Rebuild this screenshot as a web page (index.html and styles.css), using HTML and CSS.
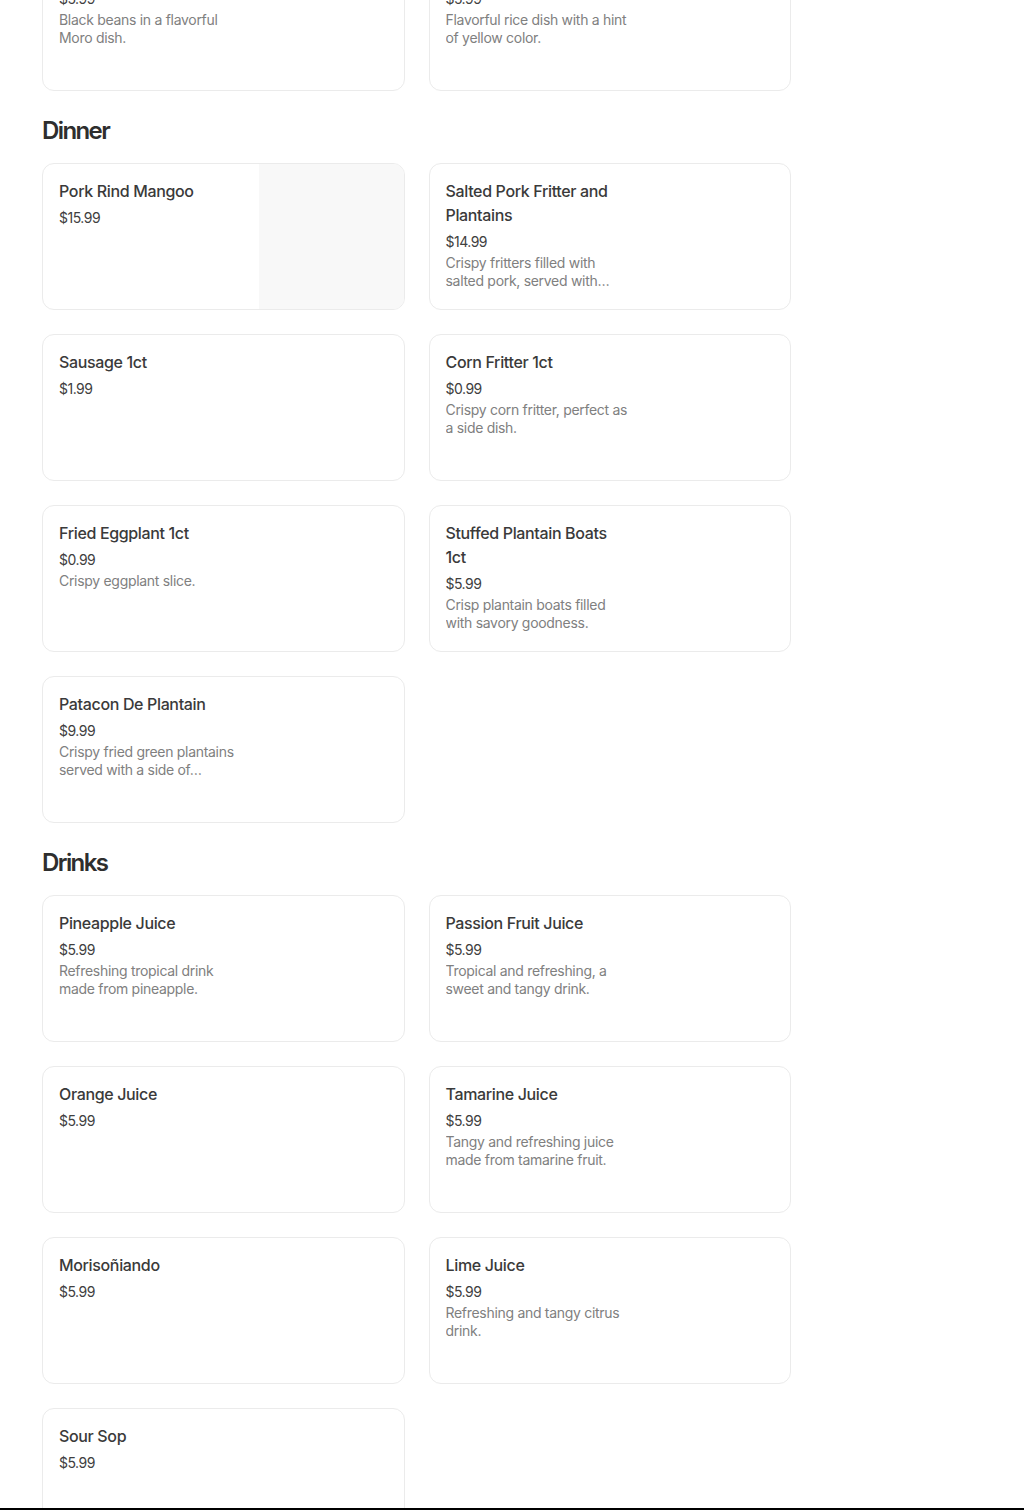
FILE: index.html
```html
<!DOCTYPE html>
<html lang="en">
<head>
<meta charset="utf-8">
<title>Menu</title>
<link rel="stylesheet" href="styles.css">
</head>
<body>
<main class="menu">
  <section class="category">
    <div class="grid">
      <article class="card">
        <div class="card__text">
          <h3 class="card__title">Moro Negro</h3>
          <div class="card__price">$5.99</div>
          <p class="card__desc">Black beans in a flavorful Moro dish.</p>
        </div>
      </article>
      <article class="card">
        <div class="card__text">
          <h3 class="card__title">Yellow Rice</h3>
          <div class="card__price">$5.99</div>
          <p class="card__desc">Flavorful rice dish with a hint of yellow color.</p>
        </div>
      </article>
    </div>
  </section>

  <section class="category">
    <h2 class="category__title">Dinner</h2>
    <div class="grid">
      <article class="card">
        <div class="card__text">
          <h3 class="card__title">Pork Rind Mangoo</h3>
          <div class="card__price">$15.99</div>
        </div>
        <div class="card__image"></div>
      </article>
      <article class="card">
        <div class="card__text">
          <h3 class="card__title">Salted Pork Fritter and Plantains</h3>
          <div class="card__price">$14.99</div>
          <p class="card__desc">Crispy fritters filled with salted pork, served with…</p>
        </div>
      </article>
      <article class="card">
        <div class="card__text">
          <h3 class="card__title">Sausage 1ct</h3>
          <div class="card__price">$1.99</div>
        </div>
      </article>
      <article class="card">
        <div class="card__text">
          <h3 class="card__title">Corn Fritter 1ct</h3>
          <div class="card__price">$0.99</div>
          <p class="card__desc">Crispy corn fritter, perfect as a side dish.</p>
        </div>
      </article>
      <article class="card">
        <div class="card__text">
          <h3 class="card__title">Fried Eggplant 1ct</h3>
          <div class="card__price">$0.99</div>
          <p class="card__desc">Crispy eggplant slice.</p>
        </div>
      </article>
      <article class="card">
        <div class="card__text">
          <h3 class="card__title">Stuffed Plantain Boats 1ct</h3>
          <div class="card__price">$5.99</div>
          <p class="card__desc">Crisp plantain boats filled with savory goodness.</p>
        </div>
      </article>
      <article class="card">
        <div class="card__text">
          <h3 class="card__title">Patacon De Plantain</h3>
          <div class="card__price">$9.99</div>
          <p class="card__desc">Crispy fried green plantains served with a side of…</p>
        </div>
      </article>
    </div>
  </section>

  <section class="category">
    <h2 class="category__title">Drinks</h2>
    <div class="grid">
      <article class="card">
        <div class="card__text">
          <h3 class="card__title">Pineapple Juice</h3>
          <div class="card__price">$5.99</div>
          <p class="card__desc">Refreshing tropical drink made from pineapple.</p>
        </div>
      </article>
      <article class="card">
        <div class="card__text">
          <h3 class="card__title">Passion Fruit Juice</h3>
          <div class="card__price">$5.99</div>
          <p class="card__desc">Tropical and refreshing, a sweet and tangy drink.</p>
        </div>
      </article>
      <article class="card">
        <div class="card__text">
          <h3 class="card__title">Orange Juice</h3>
          <div class="card__price">$5.99</div>
        </div>
      </article>
      <article class="card">
        <div class="card__text">
          <h3 class="card__title">Tamarine Juice</h3>
          <div class="card__price">$5.99</div>
          <p class="card__desc">Tangy and refreshing juice made from tamarine fruit.</p>
        </div>
      </article>
      <article class="card">
        <div class="card__text">
          <h3 class="card__title">Morisoñiando</h3>
          <div class="card__price">$5.99</div>
        </div>
      </article>
      <article class="card">
        <div class="card__text">
          <h3 class="card__title">Lime Juice</h3>
          <div class="card__price">$5.99</div>
          <p class="card__desc">Refreshing and tangy citrus drink.</p>
        </div>
      </article>
      <article class="card">
        <div class="card__text">
          <h3 class="card__title">Sour Sop</h3>
          <div class="card__price">$5.99</div>
        </div>
      </article>
    </div>
  </section>
</main>
<div class="bottom-bar"></div>
</body>
</html>
```

FILE: styles.css
```css
* { box-sizing: border-box; }

html, body {
  margin: 0;
  padding: 0;
  background: #ffffff;
}

body {
  font-family: "Inter", "Roboto", "Liberation Sans", sans-serif;
  color: #333333;
  overflow: hidden;
  height: 1510px;
}

.menu {
  width: 791px;
  padding-left: 42px;
  margin-top: -56px;
}

.category__title {
  margin: 24px 0 16px;
  font-size: 24px;
  line-height: 32px;
  font-weight: 600;
  letter-spacing: -1.6px;
  color: #2e2e2e;
}

.grid {
  display: grid;
  grid-template-columns: 1fr 1fr;
  gap: 24px;
}

.card {
  display: flex;
  height: 147px;
  border: 1px solid #ebebeb;
  border-radius: 12px;
  overflow: hidden;
  background: #fff;
}

.card__text {
  flex: 1;
  padding: 15px 16px 16px;
  min-width: 0;
}

.card__title {
  margin: 0;
  width: 176px;
  font-size: 16px;
  line-height: 24px;
  font-weight: 500;
  color: #3a3a3a;
  letter-spacing: -0.35px;
}

.card__price {
  margin-top: 5px;
  font-size: 14px;
  line-height: 20px;
  color: #404040;
  letter-spacing: -0.5px;
}

.card__desc {
  margin: 2px 0 0;
  width: 188px;
  font-size: 14px;
  line-height: 18px;
  color: #808080;
  letter-spacing: -0.3px;
  display: -webkit-box;
  -webkit-line-clamp: 2;
  -webkit-box-orient: vertical;
  overflow: hidden;
}

.card__image {
  width: 145px;
  flex: none;
  background: #f8f8f8;
}

.bottom-bar {
  position: fixed;
  left: 0;
  right: 0;
  bottom: 0;
  height: 2px;
  background: #000;
}
```
